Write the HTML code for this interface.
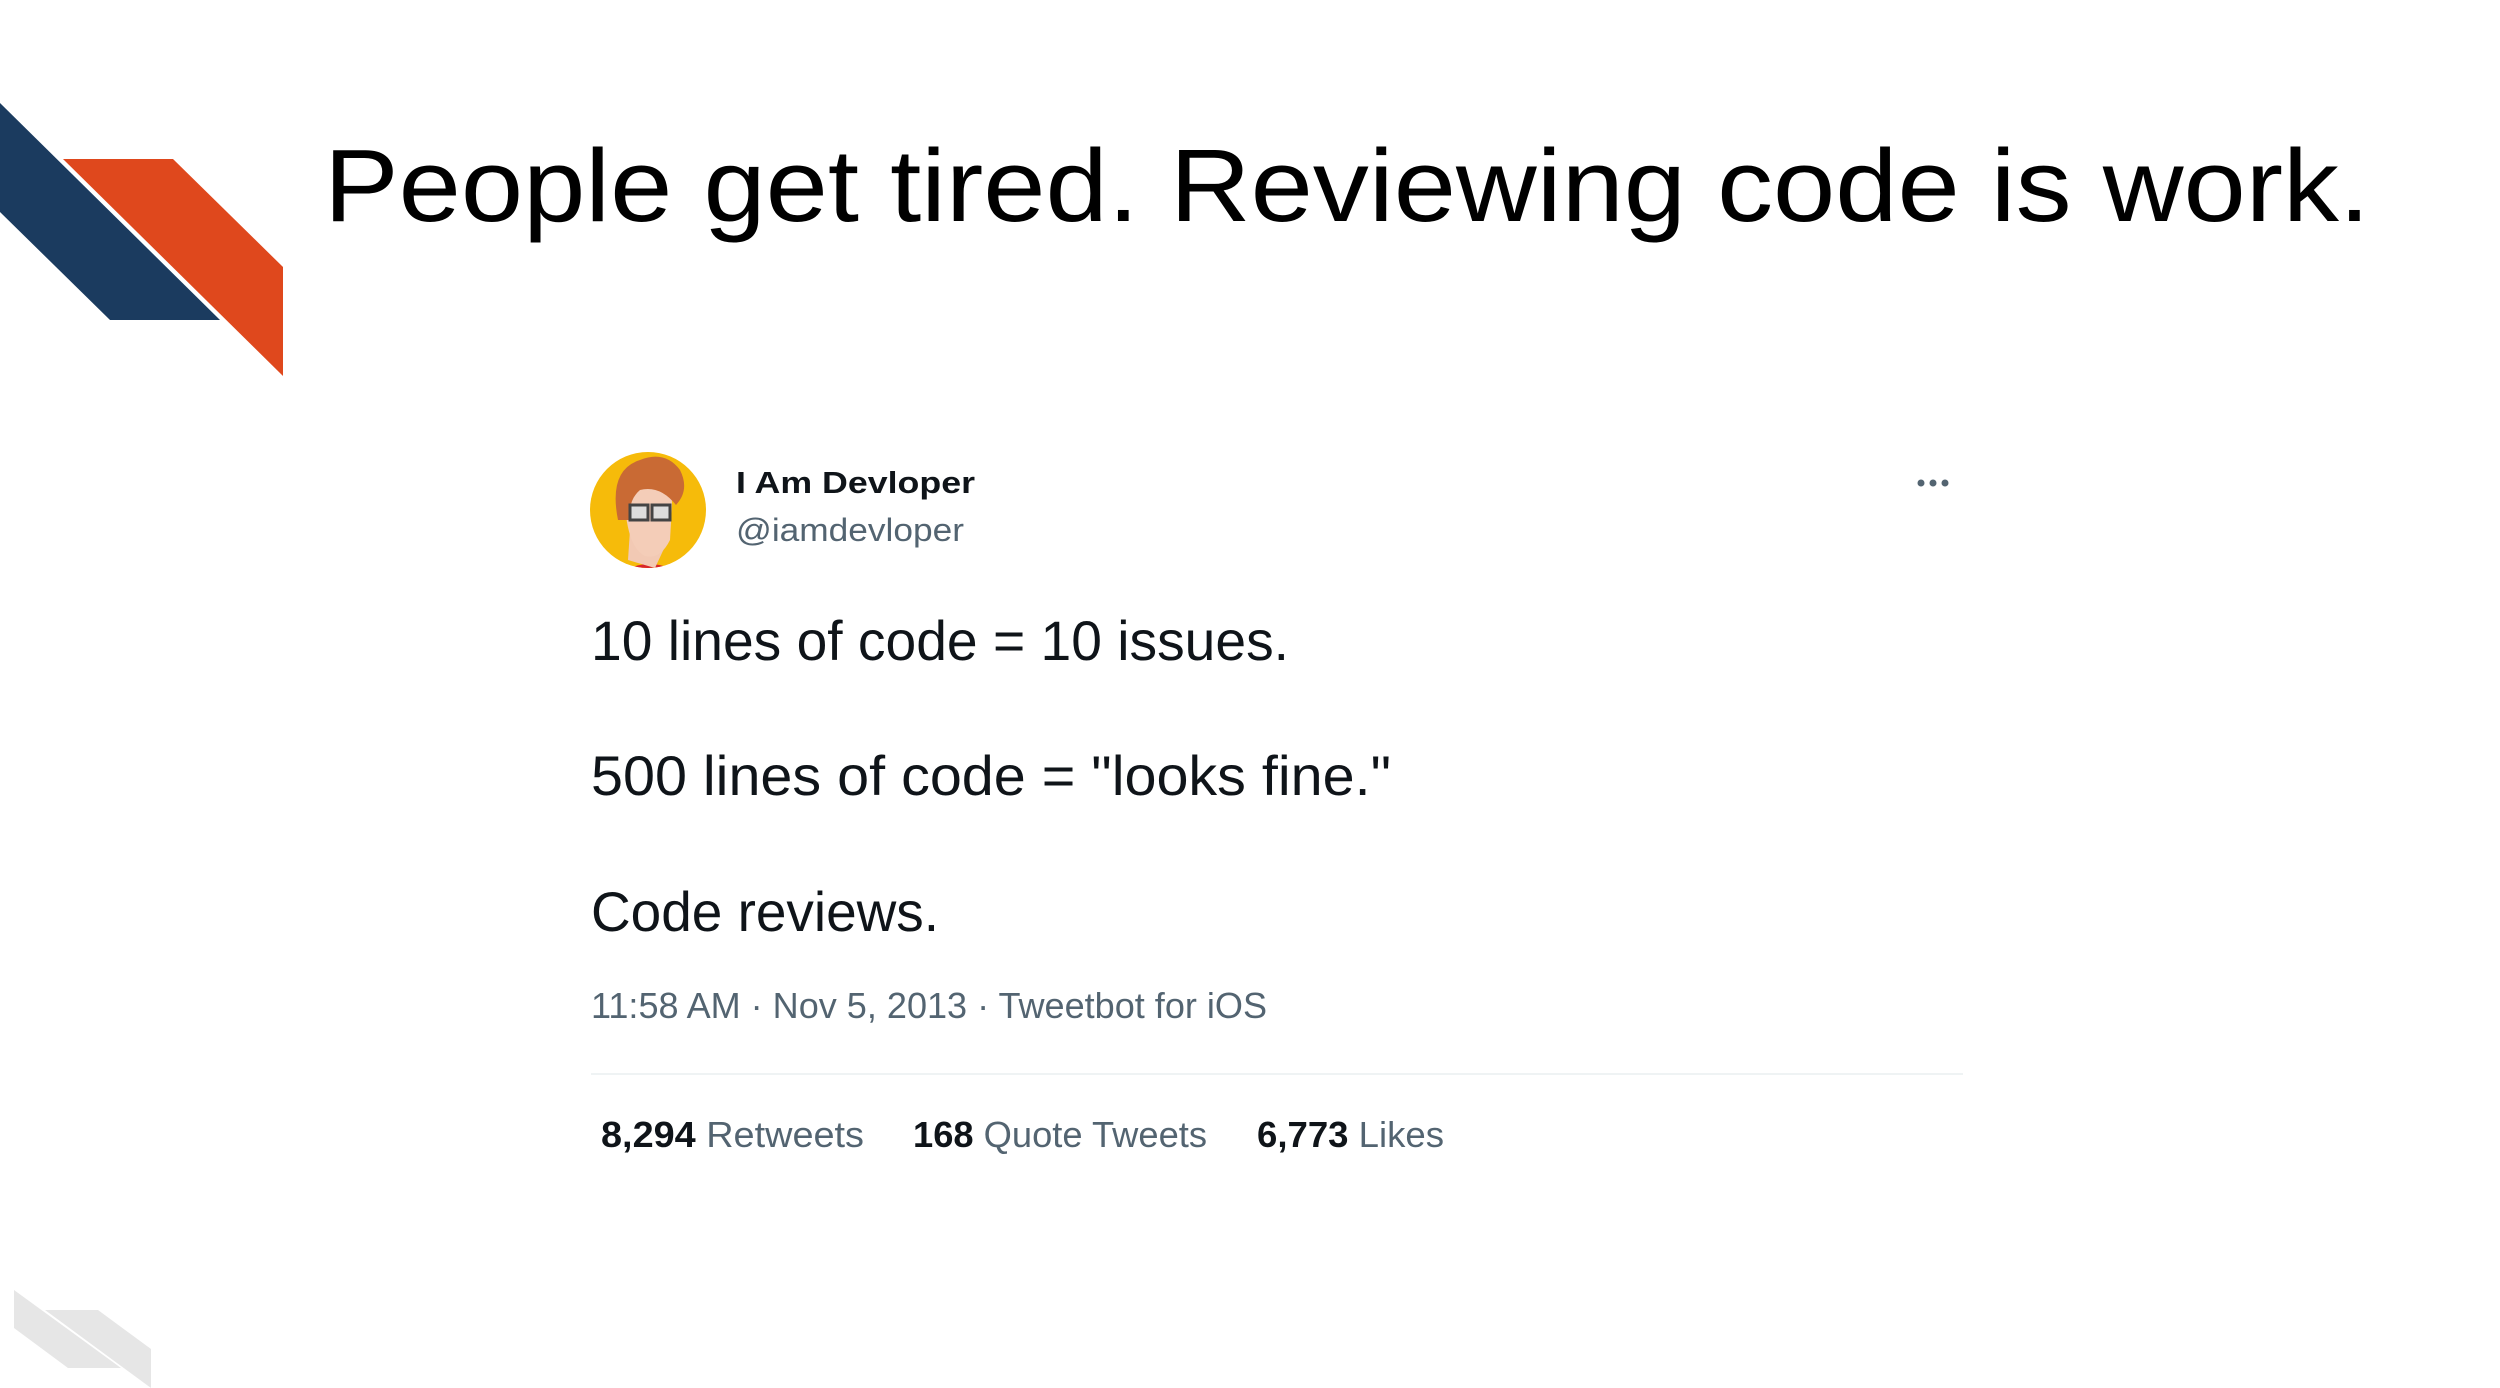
<!DOCTYPE html>
<html><head><meta charset="utf-8"><style>
html,body{margin:0;padding:0;background:#fff;width:2500px;height:1388px;overflow:hidden}
svg{display:block}
text{font-family:"Liberation Sans",Arial,sans-serif}
</style></head><body>
<svg width="2500" height="1388" viewBox="0 0 2500 1388" xmlns="http://www.w3.org/2000/svg">
<polygon points="0,103 220,320 110,320 0,212" fill="#1b3b5f"/>
<polygon points="63,159 173,159 283,267 283,376" fill="#df481d"/>
<polygon points="14,1290 121,1368 68,1368 14,1328" fill="#e6e6e6"/>
<polygon points="45,1310 98,1310 151,1349 151,1388" fill="#e6e6e6"/>

<text x="324" y="221" font-size="103" fill="#000" textLength="2046" lengthAdjust="spacingAndGlyphs">People get tired. Reviewing code is work.</text>

<defs><clipPath id="c"><circle cx="648" cy="510" r="58"/></clipPath></defs>
<circle cx="648" cy="510" r="58" fill="#f6bb0a"/>
<g clip-path="url(#c)">
<path d="M612 580 Q648 548 690 580 Z" fill="#d9262b"/>
<path d="M630 530 L628 560 L655 568 L668 540 Z" fill="#f2c9b4"/>
<path d="M625 505 Q630 470 655 468 Q672 472 672 505 L670 540 Q660 560 645 556 Q628 548 625 505Z" fill="#f4cdb8"/>
<path d="M618 520 Q608 470 640 460 Q665 450 680 470 Q690 490 676 505 Q660 485 640 490 Q628 500 630 520 Z" fill="#c96a34"/>
<rect x="630" y="505" width="18" height="15" fill="#ddd" stroke="#444" stroke-width="3"/>
<rect x="652" y="505" width="18" height="15" fill="#ddd" stroke="#444" stroke-width="3"/>
</g>

<text x="736" y="493" font-size="31" font-weight="bold" fill="#0f1419" textLength="239" lengthAdjust="spacingAndGlyphs">I Am Devloper</text>
<text x="736" y="541" font-size="32" fill="#536471" textLength="228" lengthAdjust="spacingAndGlyphs">@iamdevloper</text>
<circle cx="1921" cy="483" r="3.5" fill="#536471"/>
<circle cx="1933" cy="483" r="3.5" fill="#536471"/>
<circle cx="1945" cy="483" r="3.5" fill="#536471"/>

<text x="591" y="660" font-size="56" fill="#0f1419" textLength="698" lengthAdjust="spacingAndGlyphs">10 lines of code = 10 issues.</text>
<text x="591" y="795" font-size="56" fill="#0f1419" textLength="800" lengthAdjust="spacingAndGlyphs">500 lines of code = "looks fine."</text>
<text x="591" y="931" font-size="56" fill="#0f1419" textLength="348" lengthAdjust="spacingAndGlyphs">Code reviews.</text>

<text x="591" y="1018" font-size="36" fill="#536471" textLength="676" lengthAdjust="spacingAndGlyphs">11:58 AM · Nov 5, 2013 · Tweetbot for iOS</text>
<rect x="591" y="1073" width="1372" height="2" fill="#eff3f4"/>

<text x="601" y="1147" font-size="36" fill="#536471" textLength="263" lengthAdjust="spacingAndGlyphs"><tspan font-weight="bold" fill="#0f1419">8,294</tspan> Retweets</text>
<text x="913" y="1147" font-size="36" fill="#536471" textLength="294" lengthAdjust="spacingAndGlyphs"><tspan font-weight="bold" fill="#0f1419">168</tspan> Quote Tweets</text>
<text x="1257" y="1147" font-size="36" fill="#536471" textLength="187" lengthAdjust="spacingAndGlyphs"><tspan font-weight="bold" fill="#0f1419">6,773</tspan> Likes</text>
</svg>
</body></html>
